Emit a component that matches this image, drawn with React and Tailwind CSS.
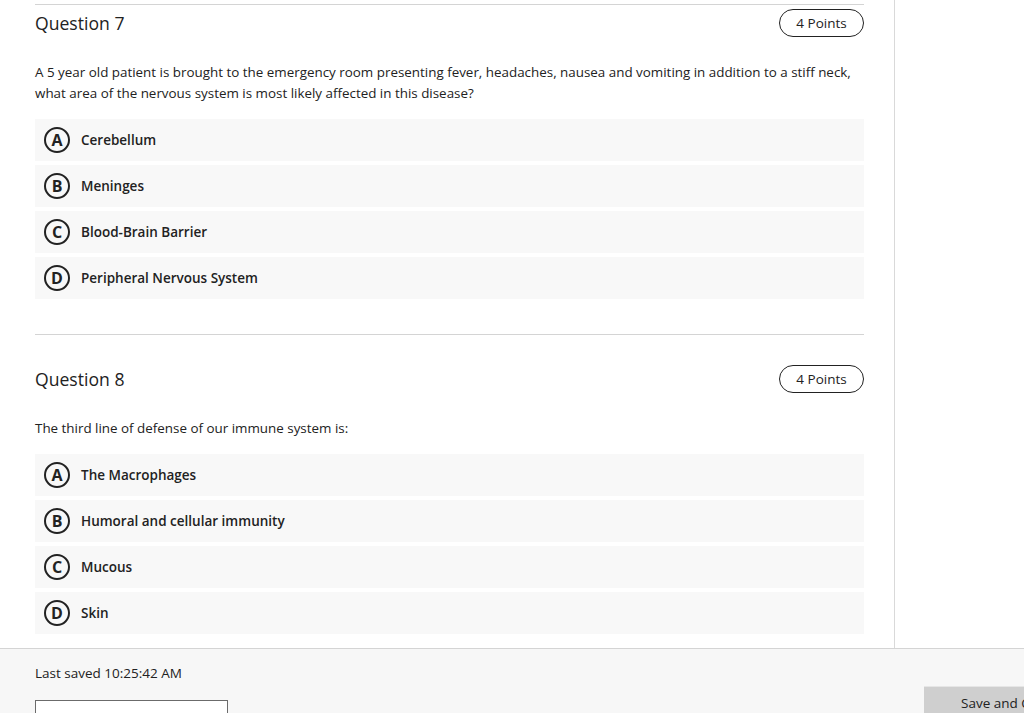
import React from 'react';

function Option({ letter, text }) {
  return (
    <div className="flex h-[42px] items-center bg-[#f8f8f8] pl-[9px]">
      <span className="flex h-[26px] w-[26px] items-center justify-center rounded-full border-2 border-[#222] text-[16px] font-bold leading-none text-[#222]">
        {letter}
      </span>
      <span className="ml-[11px] text-[13.5px] font-semibold text-[#222]">{text}</span>
    </div>
  );
}

function Question({ number, text, options }) {
  return (
    <div>
      <div className="flex h-[28px] items-center justify-between">
        <h2 className="text-[17.6px] text-[#222]">Question {number}</h2>
        <span className="flex h-[28px] w-[85px] items-center justify-center rounded-full border border-[#222] text-[13.5px] text-[#222]">
          4 Points
        </span>
      </div>
      <p className="mt-[25px] text-[13.4px] leading-[21px] text-[#222]">{text}</p>
      <div className="mt-[15px] flex flex-col gap-[4px]">
        {options.map((opt, i) => (
          <Option key={i} letter={'ABCD'[i]} text={opt} />
        ))}
      </div>
    </div>
  );
}

export default function App() {
  return (
    <div className="h-[713px] overflow-hidden bg-white" style={{ fontFamily: '"Open Sans", sans-serif' }}>
      <div className="flex h-[648px]">
        <div className="w-[895px] shrink-0 border-r border-[#d9d9d9] pl-[35px] pr-[30px] pt-[4px]">
          <div className="border-t border-[#d4d4d4] pt-[4px]">
            <Question
              number={7}
              text="A 5 year old patient is brought to the emergency room presenting fever, headaches, nausea and vomiting in addition to a stiff neck, what area of the nervous system is most likely affected in this disease?"
              options={['Cerebellum', 'Meninges', 'Blood-Brain Barrier', 'Peripheral Nervous System']}
            />
          </div>
          <div className="mt-[35px] border-t border-[#d4d4d4] pt-[30px]">
            <Question
              number={8}
              text="The third line of defense of our immune system is:"
              options={['The Macrophages', 'Humoral and cellular immunity', 'Mucous', 'Skin']}
            />
          </div>
        </div>
        <div className="flex-1" />
      </div>

      {/* Footer */}
      <div className="flex h-[65px] overflow-hidden border-t border-[#d4d4d4] bg-[#f7f7f7]">
        <div className="w-[895px] shrink-0 pl-[35px] pt-[14px]">
          <p className="text-[13.5px] leading-[20px] text-[#222]">Last saved 10:25:42 AM</p>
          <div className="mt-[17px] flex h-[40px] w-[193px] items-start border border-[#6b6b6b] bg-white px-[17px] pt-[9px] text-[13.5px] font-semibold text-[#222]">
            Saved Files (25)
          </div>
        </div>
        <div className="pl-[29px] pt-[37px]">
          <div className="flex h-[40px] w-[140px] items-start border-t border-[#e6e6e6] bg-[#cfcfcf] pl-[37px] pt-[6px] text-[13.5px] text-[#222]">
            <span className="whitespace-nowrap">Save and Close</span>
          </div>
        </div>
      </div>
    </div>
  );
}
